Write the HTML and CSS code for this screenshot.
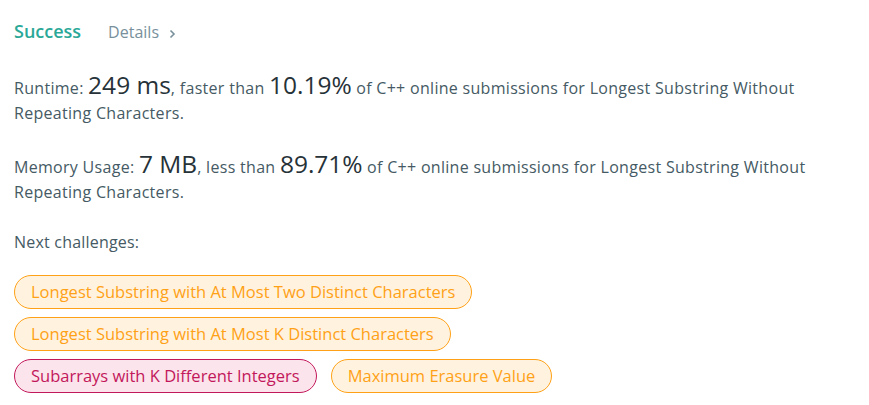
FILE: index.html
```html
<!DOCTYPE html>
<html>
<head>
<meta charset="utf-8">
<link rel="stylesheet" href="styles.css">
</head>
<body>
<div class="result">
  <div class="header">
    <span class="status">Success</span>
    <span class="details">Details <svg class="chev" width="7" height="10" viewBox="0 0 7 10"><polyline points="1.5,1.5 5,5 1.5,8.5" fill="none" stroke="#78909c" stroke-width="1.6"/></svg></span>
  </div>
  <p class="stat">Runtime: <span class="big">249 ms</span>, faster than <span class="big">10.19%</span> of C++ online submissions for Longest Substring Without Repeating Characters.</p>
  <p class="stat">Memory Usage: <span class="big">7 MB</span>, less than <span class="big">89.71%</span> of C++ online submissions for Longest Substring Without Repeating Characters.</p>
  <p class="next">Next challenges:</p>
  <div class="pills">
    <span class="pill medium">Longest Substring with At Most Two Distinct Characters</span>
    <span class="pill medium">Longest Substring with At Most K Distinct Characters</span>
    <span class="pill hard">Subarrays with K Different Integers</span>
    <span class="pill medium">Maximum Erasure Value</span>
  </div>
</div>
</body>
</html>
```
FILE: styles.css
```css
html, body {
  margin: 0;
  padding: 0;
  background: #fff;
}
body {
  font-family: "Open Sans", "Noto Sans", sans-serif;
  font-size: 16px;
  color: #455a64;
}
.result {
  padding: 19px 14px 0 14px;
  width: 805px;
}
.header {
  display: flex;
  align-items: baseline;
  gap: 27px;
  height: 28px;
}
.status {
  color: #2aa897;
  font-weight: 600;
  font-size: 18px;
}
.details {
  color: #78909c;
  font-size: 16px;
}
.chev {
  margin-left: 6px;
  vertical-align: -1px;
}
.stat {
  margin: 29px 0 0 0;
  line-height: 25px;
  letter-spacing: 0.3px;
}
.big {
  font-size: 24.5px;
  line-height: 0;
  letter-spacing: 0;
  color: #263238;
}
.next {
  margin: 25px 0 0 0;
  line-height: 25px;
  letter-spacing: 0.2px;
}
.pills {
  display: flex;
  flex-wrap: wrap;
  gap: 8px 14px;
  margin-top: 20px;
  width: 640px;
}
.pill {
  display: inline-block;
  height: 34px;
  line-height: 32px;
  box-sizing: border-box;
  padding: 0 16px;
  border-radius: 17px;
  border: 1px solid;
  font-size: 16.5px;
}
.medium {
  color: #ffa116;
  background: #fff3e0;
  border-color: #ffa116;
}
.hard {
  color: #c2185b;
  background: #fce4ec;
  border-color: #c2185b;
}
```
